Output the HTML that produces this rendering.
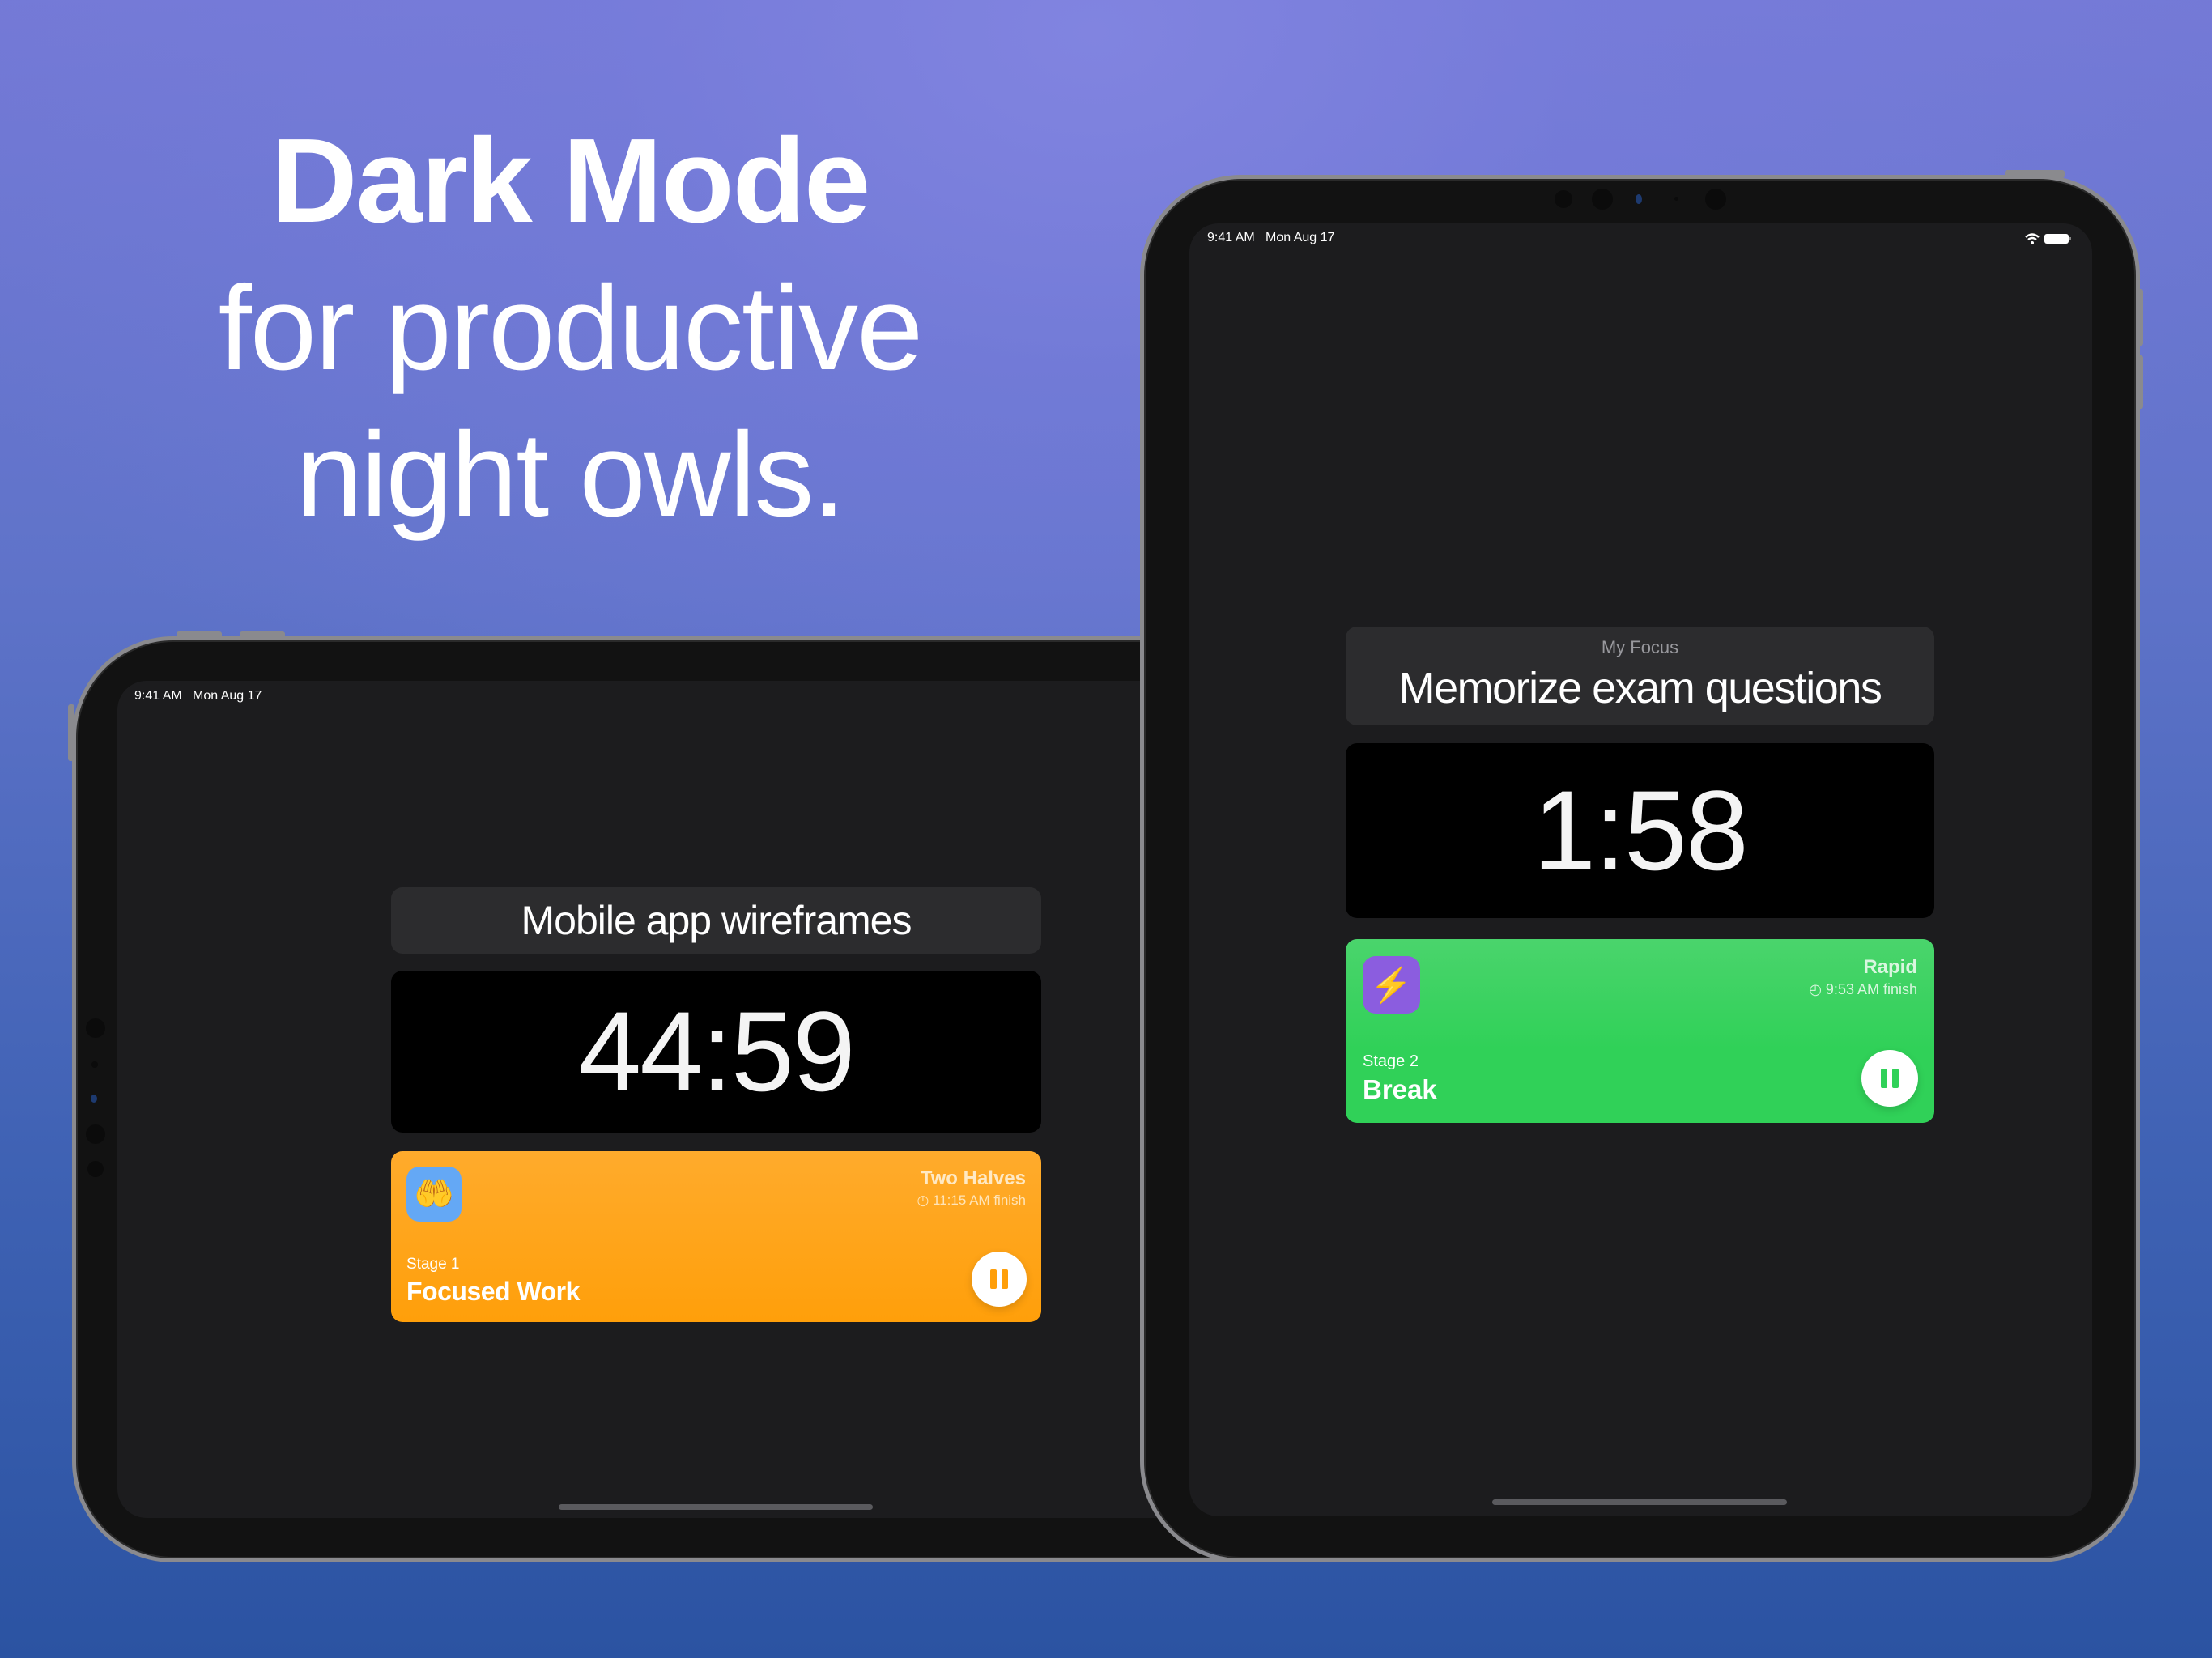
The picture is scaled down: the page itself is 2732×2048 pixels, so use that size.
<!DOCTYPE html>
<html><head><meta charset="utf-8"><style>
*{margin:0;padding:0;box-sizing:border-box}
html,body{width:2732px;height:2048px;overflow:hidden}
body{position:relative;font-family:"Liberation Sans",sans-serif;color:#fff;
background:radial-gradient(ellipse 1500px 1100px at 1350px 40px,#8184e0 0%,rgba(120,125,220,0.6) 40%,rgba(90,110,200,0) 100%),linear-gradient(180deg,#7479d6 0%,#5f73c9 35%,#3f62b4 70%,#2b53a2 100%)}
.a{position:absolute}
.head{left:0;width:1408px;text-align:center;font-size:148px;line-height:1;letter-spacing:-2px}
.ipad{position:absolute;background:#121212;border:5px solid #8a8a8e;box-shadow:inset 0 0 0 2px #2a2a2a}
.screen{position:absolute;background:#1c1c1e;border-radius:36px;overflow:hidden}
.st{position:absolute;font-size:16px}
.card{position:absolute;border-radius:14px}
.dot{position:absolute;border-radius:50%;background:#0b0b0b}
.btn{position:absolute;background:#8a8a8e;border-radius:3px}
.pause{position:absolute;width:68px;height:68px;border-radius:50%;background:#fff;box-shadow:0 4px 10px rgba(0,0,0,.15)}
.pause i{position:absolute;top:22px;width:8px;height:24px;border-radius:2px}
.tm{font-size:140px;text-align:center;color:#f4f4f4;letter-spacing:-2px}
</style></head><body>

<div class="a head" style="top:150px;font-weight:bold">Dark Mode</div>
<div class="a head" style="top:332px">for productive</div>
<div class="a head" style="top:513px">night owls.</div>

<!-- left iPad -->
<div class="btn" style="left:218px;top:780px;width:56px;height:8px"></div>
<div class="btn" style="left:296px;top:780px;width:56px;height:8px"></div>
<div class="btn" style="left:84px;top:870px;width:8px;height:70px"></div>
<div class="ipad" style="left:89px;top:786px;width:1600px;height:1144px;border-radius:125px"></div>
<div class="dot" style="left:106px;top:1258px;width:24px;height:24px"></div>
<div class="dot" style="left:113px;top:1311px;width:8px;height:8px"></div>
<div class="dot" style="left:112px;top:1352px;width:8px;height:10px;background:#1d3a70"></div>
<div class="dot" style="left:106px;top:1389px;width:24px;height:24px"></div>
<div class="dot" style="left:108px;top:1434px;width:20px;height:20px"></div>
<div class="screen" style="left:145px;top:841px;width:1480px;height:1034px">
  <div class="st" style="left:21px;top:10px">9:41 AM&nbsp;&nbsp; Mon Aug 17</div>
  <div class="card" style="left:338px;top:255px;width:803px;height:82px;background:#2c2c2e;font-size:50px;text-align:center;line-height:82px;letter-spacing:-1px">Mobile app wireframes</div>
  <div class="card tm" style="left:338px;top:358px;width:803px;height:200px;background:#000;line-height:200px">44:59</div>
  <div class="card" style="left:338px;top:581px;width:803px;height:211px;background:linear-gradient(180deg,#ffab2c,#ff9f0a)">
    <div class="a" style="left:19px;top:19px;width:68px;height:68px;border-radius:16px;background:#64a8f5;font-size:40px;text-align:center;line-height:68px">🤲</div>
    <div class="a" style="right:19px;top:20px;font-size:24px;font-weight:bold;color:#ffe9c4">Two Halves</div>
    <div class="a" style="right:19px;top:51px;font-size:17px;color:#ffe4b8">◴ 11:15 AM finish</div>
    <div class="a" style="left:19px;top:129px;font-size:19px">Stage 1</div>
    <div class="a" style="left:19px;top:155px;font-size:32px;font-weight:bold;letter-spacing:-0.5px">Focused Work</div>
    <div class="pause" style="left:717px;top:124px"><i style="left:23px;background:#ff9f0a"></i><i style="left:37px;background:#ff9f0a"></i></div>
  </div>
  <div class="a" style="left:545px;top:1017px;width:388px;height:7px;border-radius:4px;background:#5a5a5e"></div>
</div>

<!-- right iPad -->
<div class="btn" style="left:2476px;top:210px;width:74px;height:10px"></div>
<div class="btn" style="left:2638px;top:357px;width:9px;height:70px"></div>
<div class="btn" style="left:2638px;top:439px;width:9px;height:66px"></div>
<div class="ipad" style="left:1408px;top:216px;width:1235px;height:1714px;border-radius:125px"></div>
<div class="dot" style="left:1920px;top:235px;width:22px;height:22px"></div>
<div class="dot" style="left:1966px;top:233px;width:26px;height:26px"></div>
<div class="dot" style="left:2020px;top:240px;width:8px;height:12px;background:#1d3a70"></div>
<div class="dot" style="left:2068px;top:243px;width:5px;height:5px"></div>
<div class="dot" style="left:2106px;top:233px;width:26px;height:26px"></div>
<div class="screen" style="left:1469px;top:276px;width:1115px;height:1597px">
  <div class="st" style="left:22px;top:9px">9:41 AM&nbsp;&nbsp; Mon Aug 17</div>
  <svg class="a" style="left:1030px;top:11px" width="72" height="16" viewBox="0 0 72 16">
    <path d="M3 6 Q11 -1 19 6" stroke="#fff" stroke-width="2.4" fill="none"/><path d="M6 9 Q11 5 16 9" stroke="#fff" stroke-width="2.4" fill="none"/><circle cx="11" cy="13" r="2" fill="#fff"/>
    <rect x="26" y="2" width="30" height="12" rx="3" fill="#fff"/><rect x="57" y="6" width="2" height="4" fill="#888"/>
  </svg>
  <div class="card" style="left:193px;top:498px;width:727px;height:122px;background:#2c2c2e;text-align:center">
    <div style="font-size:22px;color:#98989d;margin-top:13px">My Focus</div>
    <div style="font-size:54px;margin-top:6px;letter-spacing:-1.5px">Memorize exam questions</div>
  </div>
  <div class="card tm" style="left:193px;top:642px;width:727px;height:216px;background:#000;line-height:216px">1:58</div>
  <div class="card" style="left:193px;top:884px;width:727px;height:227px;background:linear-gradient(180deg,#4ad46c,#30d158 60%)">
    <div class="a" style="left:21px;top:21px;width:71px;height:71px;border-radius:16px;background:#8b5ddf;font-size:42px;text-align:center;line-height:71px;color:#ffc400">⚡</div>
    <div class="a" style="right:21px;top:21px;font-size:24px;font-weight:bold;color:#d9f6df">Rapid</div>
    <div class="a" style="right:21px;top:52px;font-size:18px;color:#d9f6df">◴ 9:53 AM finish</div>
    <div class="a" style="left:21px;top:140px;font-size:20px">Stage 2</div>
    <div class="a" style="left:21px;top:167px;font-size:33px;font-weight:bold">Break</div>
    <div class="pause" style="left:637px;top:137px;width:70px;height:70px"><i style="left:24px;top:23px;background:#30d158"></i><i style="left:38px;top:23px;background:#30d158"></i></div>
  </div>
  <div class="a" style="left:374px;top:1576px;width:364px;height:7px;border-radius:4px;background:#5a5a5e"></div>
</div>
</body></html>
